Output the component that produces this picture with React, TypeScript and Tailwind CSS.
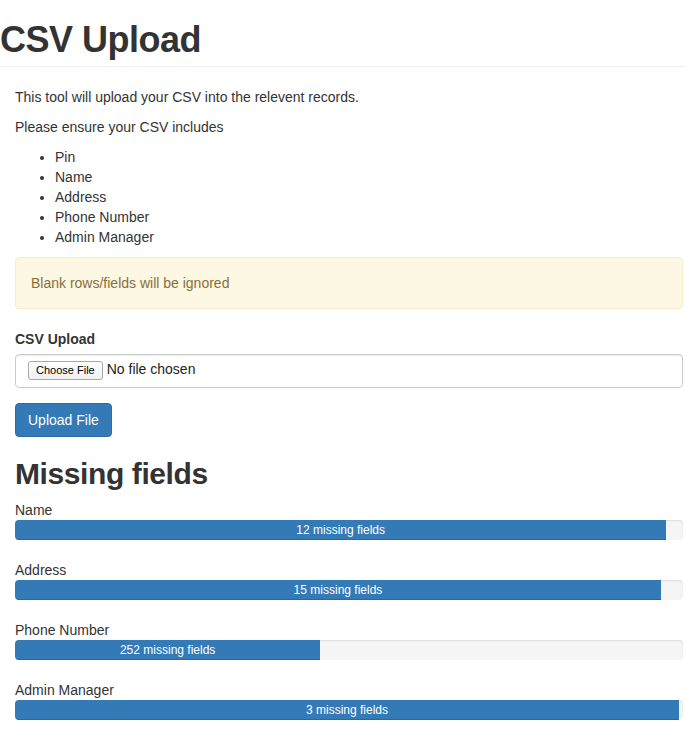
import React from "react";

const requiredFields = ["Pin", "Name", "Address", "Phone Number", "Admin Manager"];

const missing = [
    { label: "Name", count: 12, pct: 97.5 },
    { label: "Address", count: 15, pct: 96.7 },
    { label: "Phone Number", count: 252, pct: 45.7 },
    { label: "Admin Manager", count: 3, pct: 99.4 },
];

export default function App() {
    return (
        <div
            className="min-h-screen bg-white text-[14px] leading-[20px] text-[#333]"
            style={{ fontFamily: '"Liberation Sans", Arial, Helvetica, sans-serif' }}
        >
            {/* Page header */}
            <div className="border-b border-[#eee]">
                <h1 className="mt-[20px] mb-[6px] text-[36px] leading-[1.1] font-semibold tracking-[-0.5px] text-[#333]">
                    CSV Upload
                </h1>
            </div>

            <div className="pl-[15px] pr-[2px]">
                <p className="mt-[20px] mb-[10px]">This tool will upload your CSV into the relevent records.</p>
                <p className="mb-[10px]">Please ensure your CSV includes</p>
                <ul className="mb-[10px] list-disc pl-[40px]">
                    {requiredFields.map((f) => (
                        <li key={f}>{f}</li>
                    ))}
                </ul>

                {/* Warning alert */}
                <div className="mb-[20px] rounded-[4px] border border-[#faebcc] bg-[#fcf8e3] p-[15px] text-[#8a6d3b]">
                    Blank rows/fields will be ignored
                </div>

                {/* Upload form */}
                <label className="mb-[5px] block font-bold">CSV Upload</label>
                <div className="mb-[15px] flex h-[34px] items-center rounded-[4px] border border-[#ccc] px-[12px] shadow-[inset_0_1px_1px_rgba(0,0,0,0.075)]">
                    <span className="flex h-[19px] items-center rounded-[3px] border border-[#a9a9a9] bg-gradient-to-b from-white to-[#f0f0f0] px-[7px] text-[11px] leading-none text-black">
                        Choose File
                    </span>
                    <span className="ml-[4px] -mt-[3px] text-[14px] text-[#222]">No file chosen</span>
                </div>
                <button className="h-[34px] rounded-[4px] border border-[#2e6da4] bg-[#337ab7] px-[12px] text-[14px] text-white">
                    Upload File
                </button>

                <h2 className="mt-[20px] mb-[10px] text-[30px] leading-[1.1] font-semibold tracking-[-0.4px]">Missing fields</h2>

                {missing.map((m) => (
                    <div key={m.label}>
                        <div>{m.label}</div>
                        <div className="mb-[20px] flex h-[20px] overflow-hidden rounded-[4px] bg-[#f5f5f5] shadow-[inset_0_1px_2px_rgba(0,0,0,0.1)]">
                            <div
                                className="h-full bg-[#337ab7] text-center text-[12px] leading-[20px] text-white shadow-[inset_0_-1px_0_rgba(0,0,0,0.15)]"
                                style={{ width: `${m.pct}%` }}
                            >
                                {m.count} missing fields
                            </div>
                        </div>
                    </div>
                ))}
            </div>
        </div>
    );
}
